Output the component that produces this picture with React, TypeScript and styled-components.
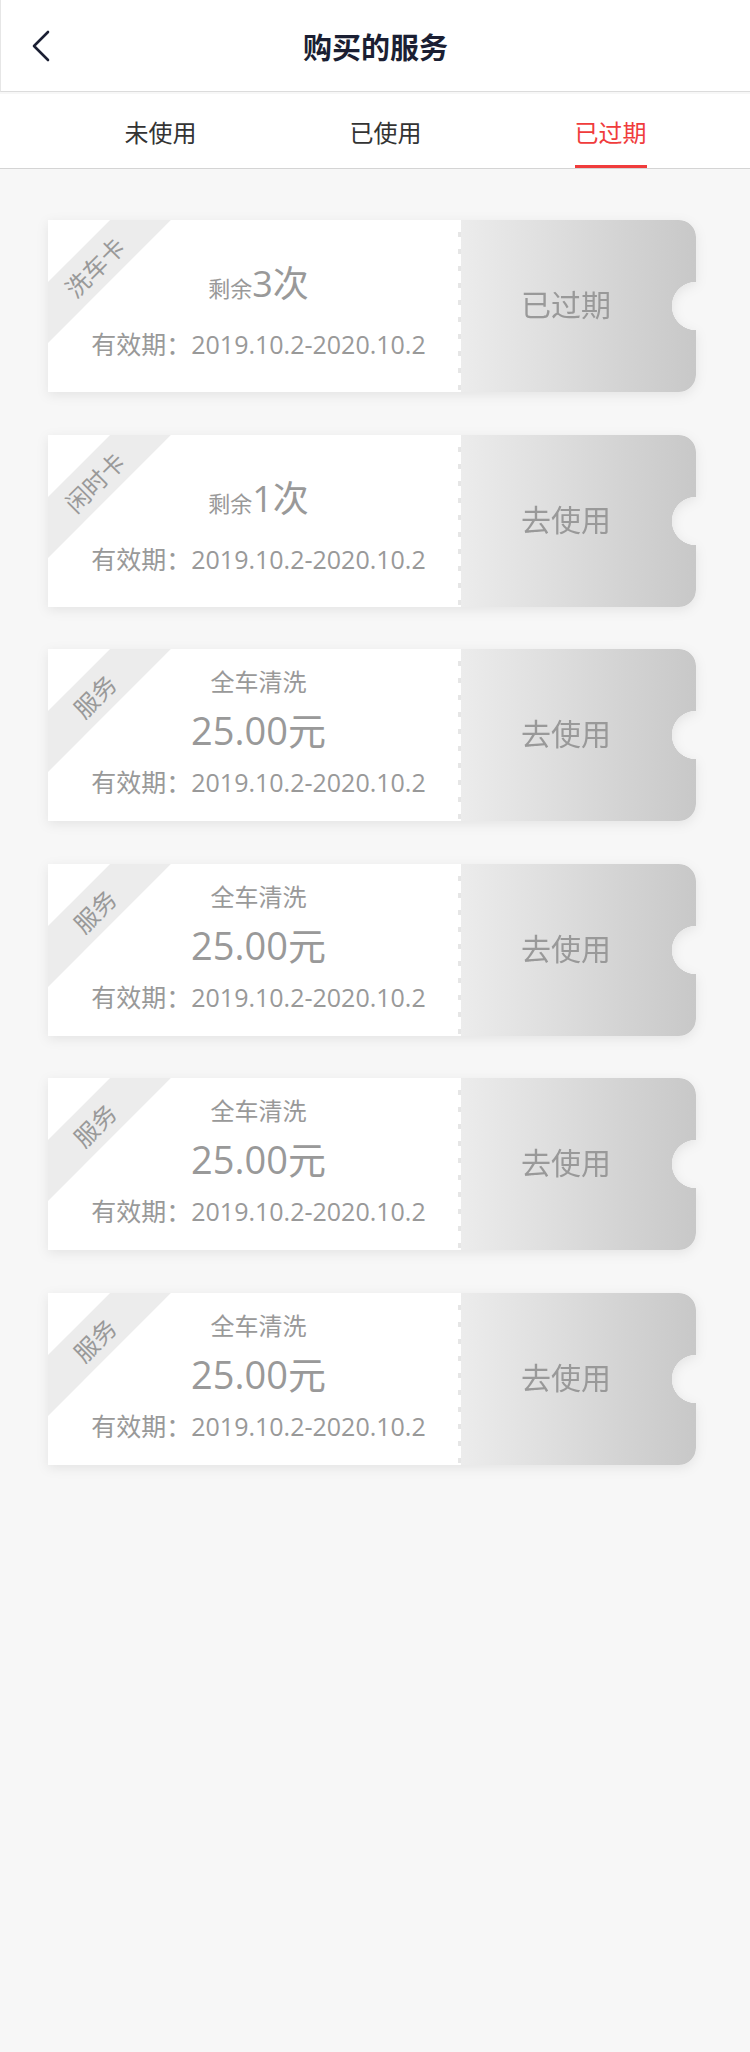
import React from 'react'
import styled, { createGlobalStyle, css } from 'styled-components'

const GlobalStyle = createGlobalStyle`
  html, body {
    margin: 0;
    background: #f7f7f7;
    font-family: "Open Sans", "Noto Sans CJK SC", sans-serif;
  }
  #root {
    min-height: 2052px;
    background: #f7f7f7;
  }
`

const Header = styled.div`
  height: 91px;
  background: #fff;
  border-bottom: 1px solid #dcdcdc;
  border-left: 1px solid #e6e6e6;
  display: grid;
  grid-template-columns: 100px 1fr 100px;
  align-items: center;
`

const BackButton = styled.div`
  padding-left: 30px;
  display: flex;
  align-items: center;
`

const Title = styled.div`
  text-align: center;
  font-size: 29px;
  font-weight: 700;
  color: #1b1f33;
  font-family: "Noto Sans CJK SC", sans-serif;
`

const Tabs = styled.div`
  margin-top: 2px;
  height: 74px;
  background: #fff;
  border-bottom: 1px solid #d4d4d4;
  display: grid;
  grid-template-columns: repeat(3, 225px);
  padding-left: 48px;
`

const Tab = styled.div`
  display: flex;
  justify-content: center;
`

const TabLabel = styled.span<{ $active?: boolean }>`
  position: relative;
  display: flex;
  align-items: center;
  height: 100%;
  font-size: 24px;
  color: ${({ $active }) => ($active ? '#f03c3c' : '#333')};
  ${({ $active }) =>
    $active &&
    css`
      &::after {
        content: '';
        position: absolute;
        left: 0;
        right: 0;
        bottom: 0;
        height: 3px;
        background: #f03c3c;
      }
    `}
`

const List = styled.div`
  padding: 51px 54px 40px 48px;
  display: flex;
  flex-direction: column;
  gap: 42.5px;
`

const Card = styled.div`
  display: flex;
  height: 172px;
  filter: drop-shadow(0 3px 6px rgba(0, 0, 0, 0.08));
`

const Main = styled.div<{ $top: number }>`
  position: relative;
  overflow: hidden;
  width: 413px;
  box-sizing: border-box;
  padding-top: ${({ $top }) => $top}px;
  padding-left: 8px;
  background: #fff;
  display: flex;
  flex-direction: column;
  align-items: center;
  color: #999;

  &::after {
    content: '';
    position: absolute;
    top: 0;
    bottom: 0;
    right: 0;
    width: 3px;
    background: repeating-linear-gradient(to bottom, #fff 0 12px, #e6e6e6 12px 17px);
  }
`

const Ribbon = styled.div`
  position: absolute;
  left: -54px;
  top: 25px;
  width: 200px;
  height: 43px;
  transform: rotate(-45deg);
  background: #ececec;
  display: flex;
  align-items: center;
  justify-content: center;
  font-size: 24px;
  color: #999;
`

const Remain = styled.div`
  line-height: 48px;
  height: 48px;
  font-size: 22px;
`

const RemainCount = styled.span`
  font-size: 36px;
`

const ServiceName = styled.div`
  font-size: 24px;
  line-height: 32px;
`

const Price = styled.div`
  margin-top: 8px;
  font-size: 38px;
  line-height: 48px;
`

const Validity = styled.div<{ $gap: number }>`
  margin-top: ${({ $gap }) => $gap}px;
  font-size: 25px;
  line-height: 32px;
  white-space: nowrap;
`

const Stub = styled.div`
  flex: 1;
  padding-right: 25px;
  padding-bottom: 6px;
  border-radius: 0 17px 17px 0;
  background: linear-gradient(90deg, #ececec 0%, #c8c8c8 100%);
  -webkit-mask: radial-gradient(circle at 100% 50%, transparent 24px, #000 24.5px);
  mask: radial-gradient(circle at 100% 50%, transparent 24px, #000 24.5px);
  display: flex;
  align-items: center;
  justify-content: center;
  font-size: 30px;
  color: #999;
`

type Item =
  | { kind: 'count'; tag: string; count: number; action: string }
  | { kind: 'service'; tag: string; name: string; price: string; action: string }

const items: Item[] = [
  { kind: 'count', tag: '洗车卡', count: 3, action: '已过期' },
  { kind: 'count', tag: '闲时卡', count: 1, action: '去使用' },
  { kind: 'service', tag: '服务', name: '全车清洗', price: '25.00', action: '去使用' },
  { kind: 'service', tag: '服务', name: '全车清洗', price: '25.00', action: '去使用' },
  { kind: 'service', tag: '服务', name: '全车清洗', price: '25.00', action: '去使用' },
  { kind: 'service', tag: '服务', name: '全车清洗', price: '25.00', action: '去使用' },
]

const ServiceCard = ({ item }: { item: Item }) => {
  return (
    <Card>
      {item.kind === 'count' ? (
        <Main $top={40}>
          <Ribbon>{item.tag}</Ribbon>
          <Remain>
            剩余<RemainCount>{item.count}次</RemainCount>
          </Remain>
          <Validity $gap={20}>有效期：2019.10.2-2020.10.2</Validity>
        </Main>
      ) : (
        <Main $top={17}>
          <Ribbon>{item.tag}</Ribbon>
          <ServiceName>{item.name}</ServiceName>
          <Price>{item.price}元</Price>
          <Validity $gap={12}>有效期：2019.10.2-2020.10.2</Validity>
        </Main>
      )}
      <Stub>{item.action}</Stub>
    </Card>
  )
}

export default function App() {
  return (
    <>
      <GlobalStyle />
      <Header>
        <BackButton>
          <svg width="20" height="32" viewBox="0 0 20 32" fill="none">
            <path d="M17 2 L3 16 L17 30" stroke="#1b1f33" strokeWidth="2.6" strokeLinecap="round" strokeLinejoin="round" />
          </svg>
        </BackButton>
        <Title>购买的服务</Title>
        <div />
      </Header>
      <Tabs>
        <Tab>
          <TabLabel>未使用</TabLabel>
        </Tab>
        <Tab>
          <TabLabel>已使用</TabLabel>
        </Tab>
        <Tab>
          <TabLabel $active>已过期</TabLabel>
        </Tab>
      </Tabs>
      <List>
        {items.map((item, i) => (
          <ServiceCard key={i} item={item} />
        ))}
      </List>
    </>
  )
}
